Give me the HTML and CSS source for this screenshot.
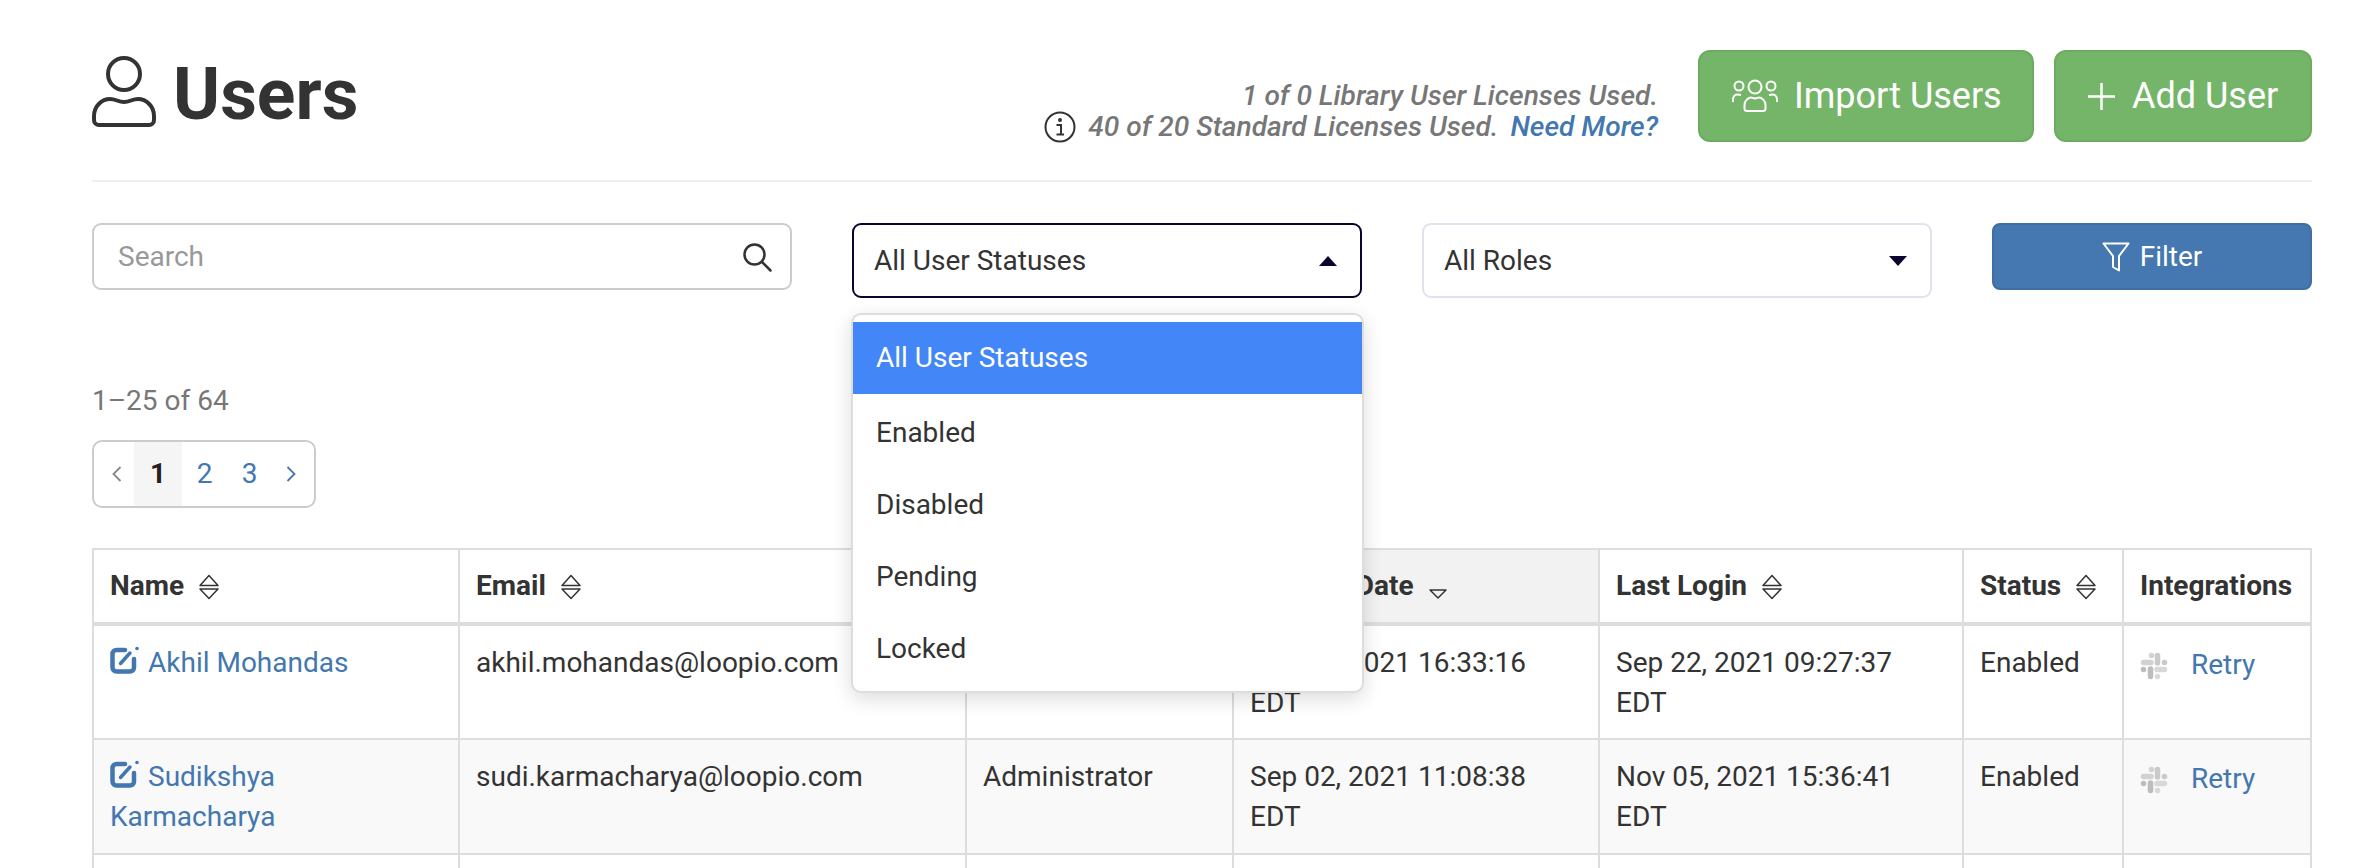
FILE: index.html
```html
<!DOCTYPE html>
<html lang="en">
<head>
<meta charset="utf-8">
<title>Users</title>
<link rel="stylesheet" href="styles.css">
</head>
<body>
<svg class="defs" aria-hidden="true">
  <symbol id="sort" viewBox="0 0 20 26">
    <path d="M1 11.500 10 1.500l9 10Z M1 15l9 9.500 9-9.500Z" fill="none" stroke="#333" stroke-width="1.500" stroke-linejoin="round"/>
  </symbol>
  <symbol id="edit" viewBox="0 0 30 28">
    <path d="M15 4H6.500A4 4 0 0 0 2.500 8V21.500A4 4 0 0 0 6.500 25.500H20A4 4 0 0 0 24 21.500V13" fill="none" stroke="#4377b0" stroke-width="4.500" stroke-linecap="round"/>
    <path d="M10.500 17.500 20 7" fill="none" stroke="#4377b0" stroke-width="3.500" stroke-linecap="round"/>
    <circle cx="27" cy="2.500" r="1.800" fill="#4377b0"/>
  </symbol>
  <symbol id="slack" viewBox="0 0 28 28">
    <g fill="none" stroke-width="5.500" stroke-linecap="round">
      <path d="M3.500 10.500H11 M11.500 3.500h.01" stroke="#d2d2d2"/>
      <path d="M17.500 3.500V11 M24.500 10.500h.01" stroke="#cacaca"/>
      <path d="M17 17.500H24.500 M17.500 24.500h.01" stroke="#d8d8d8"/>
      <path d="M10.500 17V24.500 M3.500 17.500h.01" stroke="#bdbdbd"/>
    </g>
  </symbol>
</svg>

<main class="page">
  <header class="top">
    <div class="title">
      <svg class="user-icon" viewBox="0 0 64 72" aria-hidden="true">
        <circle cx="32" cy="18" r="16" fill="none" stroke="#333" stroke-width="4"/>
        <path d="M7 69H57A5 5 0 0 0 62 64V60C62 50 54 43 46 43 40 43 38 46 32 46 26 46 24 43 18 43 10 43 2 50 2 60V64A5 5 0 0 0 7 69Z" fill="none" stroke="#333" stroke-width="4"/>
      </svg>
      <h1>Users</h1>
    </div>
    <div class="licenses">
      <div>1 of 0 Library User Licenses Used.</div>
      <div class="lic-line">
        <svg class="info-icon" viewBox="0 0 32 32" aria-hidden="true">
          <circle cx="16" cy="16" r="14.500" fill="none" stroke="#333" stroke-width="2"/>
          <circle cx="16" cy="9" r="2" fill="#333"/>
          <path d="M12.500 14H17V23M12.500 23.500H20" fill="none" stroke="#333" stroke-width="2"/>
        </svg>
        <span>40 of 20 Standard Licenses Used.</span>
        <a class="need" href="#">Need More?</a>
      </div>
    </div>
    <a class="btn btn-import" href="#">
      <svg class="people-icon" viewBox="0 0 46 34" aria-hidden="true">
        <g fill="none" stroke="#fff" stroke-width="2">
          <circle cx="23" cy="8" r="6.500"/>
          <circle cx="7" cy="7" r="4.500"/>
          <circle cx="39" cy="7" r="4.500"/>
          <path d="M15 32H31A2.500 2.500 0 0 0 33.500 29.500V26C33.500 21 29 18.500 27 18.500 25.500 18.500 25 19.500 23 19.500 21 19.500 20.500 18.500 19 18.500 17 18.500 12.500 21 12.500 26V29.500A2.500 2.500 0 0 0 15 32Z"/>
          <path d="M1 23V20.500C1 17 3.500 15.500 5.500 15.500 7 15.500 7.500 16 9 16M45 23V20.500C45 17 42.500 15.500 40.500 15.500 39 15.500 38.500 16 37 16"/>
        </g>
      </svg>
      Import Users
    </a>
    <a class="btn btn-add" href="#">
      <svg class="plus-icon" viewBox="0 0 29 29" aria-hidden="true">
        <path d="M14.500 1V28M1 14.500H28" fill="none" stroke="#fff" stroke-width="2.500"/>
      </svg>
      Add User
    </a>
  </header>

  <section class="filters">
    <div class="search">
      <span class="placeholder">Search</span>
      <svg class="search-icon" viewBox="0 0 30 30" aria-hidden="true">
        <circle cx="12.500" cy="12.500" r="10" fill="none" stroke="#333" stroke-width="2.500"/>
        <path d="M20 20 28.500 28.500" fill="none" stroke="#333" stroke-width="2.500" stroke-linecap="round"/>
      </svg>
    </div>
    <div class="select-wrap">
      <div class="select select-open">
        <span>All User Statuses</span>
        <i class="arrow arrow-up"></i>
      </div>
      <ul class="menu">
        <li class="option option-active">All User Statuses</li>
        <li class="option">Enabled</li>
        <li class="option">Disabled</li>
        <li class="option">Pending</li>
        <li class="option">Locked</li>
      </ul>
    </div>
    <div class="select">
      <span>All Roles</span>
      <i class="arrow arrow-down"></i>
    </div>
    <a class="filter-btn" href="#">
      <svg class="funnel-icon" viewBox="0 0 28 30" aria-hidden="true">
        <path d="M1.500 1.500H26.500L17 14V28.500L11 25V14Z" fill="none" stroke="#fff" stroke-width="2" stroke-linejoin="round"/>
      </svg>
      Filter
    </a>
  </section>

  <p class="count">1–25 of 64</p>

  <nav class="pager">
    <svg class="chev" viewBox="0 0 10 18" aria-hidden="true"><path d="M8.500 2 1.500 9l7 7" fill="none" stroke="#888" stroke-width="1.800"/></svg>
    <span class="pg pg-current">1</span>
    <a class="pg" href="#">2</a>
    <a class="pg" href="#">3</a>
    <svg class="chev" viewBox="0 0 10 18" aria-hidden="true"><path d="M1.500 2l7 7-7 7" fill="none" stroke="#4377b0" stroke-width="1.800"/></svg>
  </nav>

  <table class="users">
    <colgroup>
      <col class="c-name"><col class="c-email"><col class="c-role"><col class="c-date"><col class="c-login"><col class="c-status"><col class="c-int">
    </colgroup>
    <thead>
      <tr>
        <th>Name <svg class="sort"><use href="#sort"/></svg></th>
        <th>Email <svg class="sort"><use href="#sort"/></svg></th>
        <th>Role <svg class="sort"><use href="#sort"/></svg></th>
        <th class="sorted">Created Date <svg class="sort-down" viewBox="0 0 20 12" aria-hidden="true"><path d="M2 2l8 8 8-8Z" fill="none" stroke="#333" stroke-width="1.500" stroke-linejoin="round"/></svg></th>
        <th>Last Login <svg class="sort"><use href="#sort"/></svg></th>
        <th>Status <svg class="sort"><use href="#sort"/></svg></th>
        <th>Integrations</th>
      </tr>
    </thead>
    <tbody>
      <tr>
        <td><a class="name" href="#"><svg class="edit"><use href="#edit"/></svg>Akhil Mohandas</a></td>
        <td>akhil.mohandas@loopio.com</td>
        <td>Administrator</td>
        <td>Sep 02, 2021 16:33:16<br>EDT</td>
        <td>Sep 22, 2021 09:27:37<br>EDT</td>
        <td>Enabled</td>
        <td class="integ"><svg class="slack"><use href="#slack"/></svg><a href="#">Retry</a></td>
      </tr>
      <tr class="alt">
        <td><a class="name" href="#"><svg class="edit"><use href="#edit"/></svg>Sudikshya Karmacharya</a></td>
        <td>sudi.karmacharya@loopio.com</td>
        <td>Administrator</td>
        <td>Sep 02, 2021 11:08:38<br>EDT</td>
        <td>Nov 05, 2021 15:36:41<br>EDT</td>
        <td>Enabled</td>
        <td class="integ"><svg class="slack"><use href="#slack"/></svg><a href="#">Retry</a></td>
      </tr>
      <tr>
        <td></td><td></td><td></td><td></td><td></td><td></td><td></td>
      </tr>
    </tbody>
  </table>
</main>
</body>
</html>
```
FILE: styles.css
```css
* { box-sizing: border-box; }
html, body { height: 868px; overflow: hidden; }
body {
  margin: 0;
  background: #fff;
  color: #333;
  font-family: Roboto, "Liberation Sans", sans-serif;
  font-size: 28px;
  line-height: 40px;
}
a { color: #4377b0; text-decoration: none; }
svg { display: block; flex: none; }
.defs { position: absolute; width: 0; height: 0; }

.page { padding: 50px 54px 0 92px; }

.top {
  display: flex;
  align-items: flex-start;
  padding-bottom: 38px;
  border-bottom: 2px solid #eee;
  height: 132px;
}
.title { display: flex; align-items: flex-start; gap: 17px; margin-top: 6px; }
.user-icon { width: 64px; height: 72px; }
h1 { margin: 2px 0 0; font-size: 71.500px; line-height: 74px; font-weight: 700; color: #333; }

.licenses {
  margin: 31px 40px 0 auto;
  text-align: right;
  font-size: 28.150px;
  line-height: 30px;
  font-style: italic;
  font-weight: 500;
  color: #777;
}
.lic-line { display: flex; align-items: center; gap: 12px; }
.info-icon { width: 32px; height: 32px; }

.btn {
  display: flex;
  align-items: center;
  height: 92px;
  padding: 0 31px;
  background: #75b569;
  border: 2px solid #6cab60;
  border-radius: 12px;
  color: #fff;
  font-size: 36px;
  white-space: nowrap;
}
.btn-import { gap: 16px; width: 336px; padding-left: 32px; }
.btn-add { gap: 16px; width: 258px; margin-left: 20px; }
.people-icon { width: 46px; height: 34px; }
.plus-icon { width: 29px; height: 29px; }

.filters {
  display: flex;
  justify-content: space-between;
  align-items: flex-start;
  margin-top: 41px;
}
.search {
  display: flex;
  align-items: center;
  justify-content: space-between;
  width: 700px;
  height: 67px;
  padding: 0 18px 0 24px;
  border: 2px solid #ccc;
  border-radius: 9px;
}
.placeholder { color: #999; }
.search-icon { width: 30px; height: 30px; }

.select-wrap { position: relative; width: 510px; }
.select {
  display: flex;
  align-items: center;
  justify-content: space-between;
  width: 510px;
  height: 75px;
  padding: 0 23px 0 20px;
  border: 2px solid #e2e2ee;
  border-radius: 9px;
}
.select-open { border-color: #0a0430; }
.arrow { width: 0; height: 0; border-left: 9px solid transparent; border-right: 9px solid transparent; }
.arrow-up { border-bottom: 10px solid #0a0430; }
.arrow-down { border-top: 10px solid #0a0430; }

.menu {
  position: absolute;
  z-index: 2;
  top: 90px;
  left: -1px;
  right: -2px;
  margin: 0;
  padding: 7px 0 6px;
  list-style: none;
  background: #fff;
  border: 2px solid #ddd;
  border-radius: 10px;
  box-shadow: 0 6px 20px rgba(0, 0, 0, .14);
}
.option { height: 72px; line-height: 72px; padding-left: 23px; }
.option-active { margin-bottom: 3px; background: #4286f7; color: #fff; }

.filter-btn {
  display: flex;
  align-items: center;
  justify-content: center;
  gap: 10px;
  width: 320px;
  height: 67px;
  background: #4577b0;
  border: 2px solid #3f6ea5;
  border-radius: 8px;
  color: #fff;
}
.funnel-icon { width: 28px; height: 30px; }

.count { margin: 0; padding-top: 83px; color: #777; }

.pager {
  display: flex;
  align-items: center;
  width: 224px;
  height: 68px;
  margin-top: 19px;
  padding-left: 40px;
  border: 2px solid #ccc;
  border-radius: 10px;
}
.chev { width: 10px; height: 18px; }
.pager .chev:first-child { margin: 0 12px 0 -22px; }
.pager .chev:last-child { margin-left: 14px; }
.pg { width: 45px; height: 64px; line-height: 64px; text-align: center; }
.pg-current { width: 48px; background: #f5f5f5; font-weight: 700; color: #222; }

.users {
  width: 2220px;
  margin-top: 40px;
  table-layout: fixed;
  border-collapse: collapse;
}
.c-name { width: 366px; }
.c-email { width: 507px; }
.c-role { width: 267px; }
.c-date { width: 366px; }
.c-login { width: 364px; }
.c-status { width: 160px; }
.c-int { width: 188px; }
.users th, .users td {
  border: 2px solid #ddd;
  padding: 17px 16px 13px;
  text-align: left;
  vertical-align: top;
}
.users th {
  height: 73px;
  padding-top: 16px;
  padding-bottom: 16px;
  border-bottom-width: 4px;
  font-weight: 700;
  white-space: nowrap;
  vertical-align: middle;
}
.users td { height: 115px; }
.users th.sorted { background: #f2f2f2; }
.alt td { background: #f9f9f9; }
.sort { display: inline-block; width: 20px; height: 26px; margin-left: 8px; vertical-align: -5px; }
.sort-down { display: inline-block; width: 20px; height: 12px; margin-left: 8px; vertical-align: -5px; }
.edit { display: inline-block; width: 30px; height: 28px; margin-right: 8px; vertical-align: -2px; }
.users td.integ { padding-top: 19px; }
.integ { white-space: nowrap; }
.slack { display: inline-block; width: 28px; height: 28px; margin-right: 23px; vertical-align: -6px; }
```
